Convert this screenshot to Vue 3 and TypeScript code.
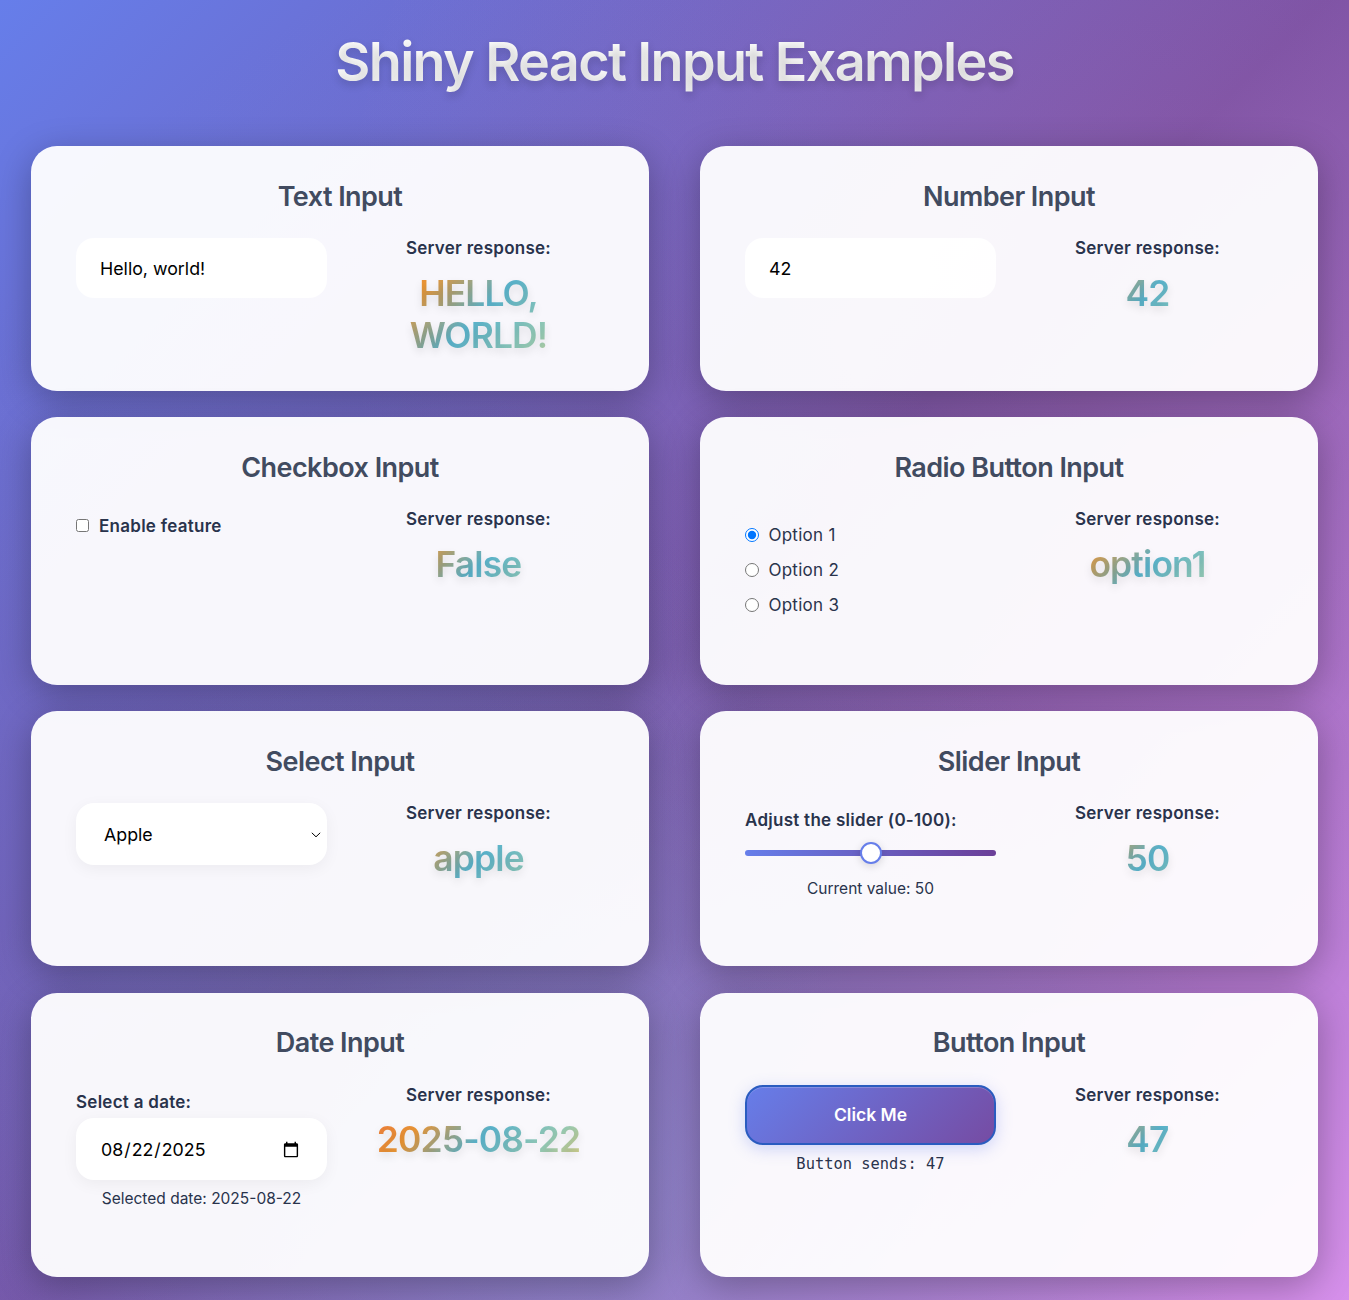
<script setup lang="ts">
import { computed, ref } from 'vue'

const text = ref('Hello, world!')
const num = ref(42)
const enabled = ref(false)
const radio = ref('option1')
const fruit = ref('apple')
const slider = ref(50)
const date = ref('2025-08-22')
const clicks = ref(47)

const options = [
  { value: 'option1', label: 'Option 1' },
  { value: 'option2', label: 'Option 2' },
  { value: 'option3', label: 'Option 3' },
]

const upper = computed(() => text.value.toUpperCase())
const enabledText = computed(() => (enabled.value ? 'True' : 'False'))
</script>

<template>
  <main class="page">
    <h1 class="title">Shiny React Input Examples</h1>
    <div class="grid">
      <section class="card">
        <h2>Text Input</h2>
        <div class="cols">
          <div class="side"><input v-model="text" class="field" type="text" /></div>
          <div class="response"><div class="label">Server response:</div><div class="value">{{ upper }}</div></div>
        </div>
      </section>

      <section class="card">
        <h2>Number Input</h2>
        <div class="cols">
          <div class="side"><input v-model="num" class="field" type="number" /></div>
          <div class="response"><div class="label">Server response:</div><div class="value">{{ num }}</div></div>
        </div>
      </section>

      <section class="card">
        <h2>Checkbox Input</h2>
        <div class="cols">
          <div class="side">
            <label class="check"><input v-model="enabled" type="checkbox" /><span class="label">Enable feature</span></label>
          </div>
          <div class="response"><div class="label">Server response:</div><div class="value">{{ enabledText }}</div></div>
        </div>
      </section>

      <section class="card">
        <h2>Radio Button Input</h2>
        <div class="cols">
          <div class="side radios">
            <label v-for="o in options" :key="o.value" class="radio">
              <input v-model="radio" type="radio" name="choice" :value="o.value" /><span>{{ o.label }}</span>
            </label>
          </div>
          <div class="response"><div class="label">Server response:</div><div class="value">{{ radio }}</div></div>
        </div>
      </section>

      <section class="card">
        <h2>Select Input</h2>
        <div class="cols">
          <div class="side">
            <div class="select-wrap">
              <select v-model="fruit" class="field raised select">
                <option value="apple">Apple</option>
                <option value="banana">Banana</option>
                <option value="cherry">Cherry</option>
              </select>
              <svg class="chevron" width="10" height="6" viewBox="0 0 10 6" fill="none" stroke="#000" stroke-width="1">
                <path d="M0.8 0.8 5 4.8 9.2 0.8" />
              </svg>
            </div>
          </div>
          <div class="response"><div class="label">Server response:</div><div class="value">{{ fruit }}</div></div>
        </div>
      </section>

      <section class="card">
        <h2>Slider Input</h2>
        <div class="cols">
          <div class="side slider">
            <div class="label">Adjust the slider (0-100):</div>
            <input v-model="slider" class="range" type="range" min="0" max="100" />
            <div class="note">Current value: {{ slider }}</div>
          </div>
          <div class="response"><div class="label">Server response:</div><div class="value">{{ slider }}</div></div>
        </div>
      </section>

      <section class="card">
        <h2>Date Input</h2>
        <div class="cols">
          <div class="side date">
            <div class="label">Select a date:</div>
            <input v-model="date" class="field raised" type="date" />
            <div class="note">Selected date: {{ date }}</div>
          </div>
          <div class="response"><div class="label">Server response:</div><div class="value">{{ date }}</div></div>
        </div>
      </section>

      <section class="card">
        <h2>Button Input</h2>
        <div class="cols">
          <div class="side">
            <button class="btn" type="button" @click="clicks++">Click Me</button>
            <div class="mono">Button sends: {{ clicks }}</div>
          </div>
          <div class="response"><div class="label">Server response:</div><div class="value">{{ clicks }}</div></div>
        </div>
      </section>
    </div>
  </main>
</template>

<style>
body {
  background: #764ba2;
}
</style>

<style scoped>
* {
  box-sizing: border-box;
}
.page {
  height: 1300px;
  padding: 28px 31px 0;
  overflow: hidden;
  font-family: Inter, 'Liberation Sans', sans-serif;
  color: #29334c;
  background:
    radial-gradient(circle 650px at 44% 92%, rgba(120, 160, 205, 0.42) 0%, transparent 100%),
    radial-gradient(circle 700px at 10% 75%, rgba(110, 119, 198, 0.35) 0%, transparent 100%),
    radial-gradient(circle at 80% 20%, rgba(235, 150, 205, 0.14) 0%, transparent 50%),
    radial-gradient(circle at 40% 40%, rgba(120, 140, 220, 0.2) 0%, transparent 50%),
    linear-gradient(135deg, #667eea 0%, #774fa2 50%, #d690eb 100%);
}
.title {
  margin: 0 0 50px;
  height: 68px;
  line-height: 68px;
  text-align: center;
  font-size: 54px;
  font-weight: 600;
  letter-spacing: -1.67px;
  color: transparent;
  background: linear-gradient(135deg, #fff 0%, #f8f8f8 100%);
  background-clip: text;
  -webkit-background-clip: text;
  text-shadow: 0 4px 8px rgba(0, 0, 0, 0.16);
}
.grid {
  display: grid;
  grid-template-columns: 1fr 1fr;
  grid-template-rows: 244.5px 267.5px 255px 284px;
  gap: 26.5px 51px;
}
.card {
  padding: 34.6px 45px 0;
  border-radius: 26px;
  background: rgba(255, 255, 255, 0.95);
  box-shadow: 0 9px 36px rgba(0, 0, 0, 0.28);
}
h2 {
  margin: 0 0 25.9px;
  line-height: 32px;
  text-align: center;
  font-size: 27px;
  font-weight: 600;
  letter-spacing: -0.55px;
  color: #414b60;
}
.cols {
  display: grid;
  grid-template-columns: 1fr 1fr;
  gap: 26px;
}
.response {
  text-align: center;
}
.label {
  line-height: 20px;
  font-size: 17px;
  font-weight: 600;
  letter-spacing: 0.27px;
}
.value {
  margin-top: 14.2px;
  line-height: 42.2px;
  font-size: 35.4px;
  font-weight: 600;
  letter-spacing: -0.85px;
  color: transparent;
  background: linear-gradient(135deg, #f2713d 0%, #ea9636 25%, #5ab4cd 50%, #98ccb5 75%, #f4c966 100%);
  background-clip: text;
  -webkit-background-clip: text;
  text-shadow: 0 4px 8px rgba(0, 0, 0, 0.1);
}
.field {
  display: block;
  width: 100%;
  height: 60px;
  padding: 0 24px;
  border: 0;
  border-radius: 18px;
  outline: 0;
  background: rgba(255, 255, 255, 0.9);
  color: #000;
  font-family: inherit;
  font-size: 17.8px;
}
.raised {
  height: 62px;
  background: #fff;
  box-shadow: 0 4px 16px rgba(0, 0, 0, 0.05);
}
.select-wrap {
  position: relative;
}
.select {
  -webkit-appearance: none;
  appearance: none;
  padding: 0 28px;
}
.chevron {
  position: absolute;
  top: 28.5px;
  right: 6.5px;
  pointer-events: none;
}
.check,
.radio {
  display: flex;
  align-items: center;
  gap: 10px;
}
.check {
  padding-top: 5.5px;
}
.check .label {
  padding-top: 1px;
}
.check input {
  width: 13px;
  height: 13px;
  margin: 0;
}
.radios {
  padding-top: 7.6px;
}
.radio {
  height: 35.3px;
  gap: 9.4px;
  font-size: 17px;
  letter-spacing: 0.27px;
}
.radio input {
  width: 14px;
  height: 14px;
  margin: 0;
}
.slider {
  padding-top: 6.5px;
}
.range {
  -webkit-appearance: none;
  appearance: none;
  display: block;
  width: 100%;
  height: 6px;
  margin: 20px 0 0;
  border-radius: 3px;
  outline: 0;
  background: linear-gradient(90deg, #667eea 0%, #6b3f98 100%);
}
.range::-webkit-slider-thumb {
  -webkit-appearance: none;
  width: 22px;
  height: 22px;
  border: 2px solid #667eea;
  border-radius: 50%;
  background: #fff;
  box-shadow: 0 2px 8px rgba(0, 0, 0, 0.15);
}
.note {
  line-height: 20px;
  text-align: center;
  font-size: 15.5px;
}
.slider .note {
  margin-top: 22.6px;
}
.date {
  padding-top: 7px;
}
.date .field {
  margin-top: 6px;
  padding: 1px 25px 0 24px;
}
.date .note {
  margin-top: 9.4px;
}
.btn {
  display: block;
  width: 100%;
  height: 60px;
  border: 2px solid #2a5cc0;
  border-radius: 18px;
  background: linear-gradient(135deg, #667eea 0%, #764ba2 100%);
  background-origin: border-box;
  box-shadow: 0 4px 16px rgba(102, 126, 234, 0.3), inset 0 1px 0 rgba(255, 255, 255, 0.2);
  color: #fff;
  font-family: inherit;
  font-size: 17.5px;
  font-weight: 600;
}
.mono {
  margin-top: 8.6px;
  line-height: 20px;
  text-align: center;
  font-family: 'DejaVu Sans Mono', monospace;
  font-size: 15.4px;
}
</style>
